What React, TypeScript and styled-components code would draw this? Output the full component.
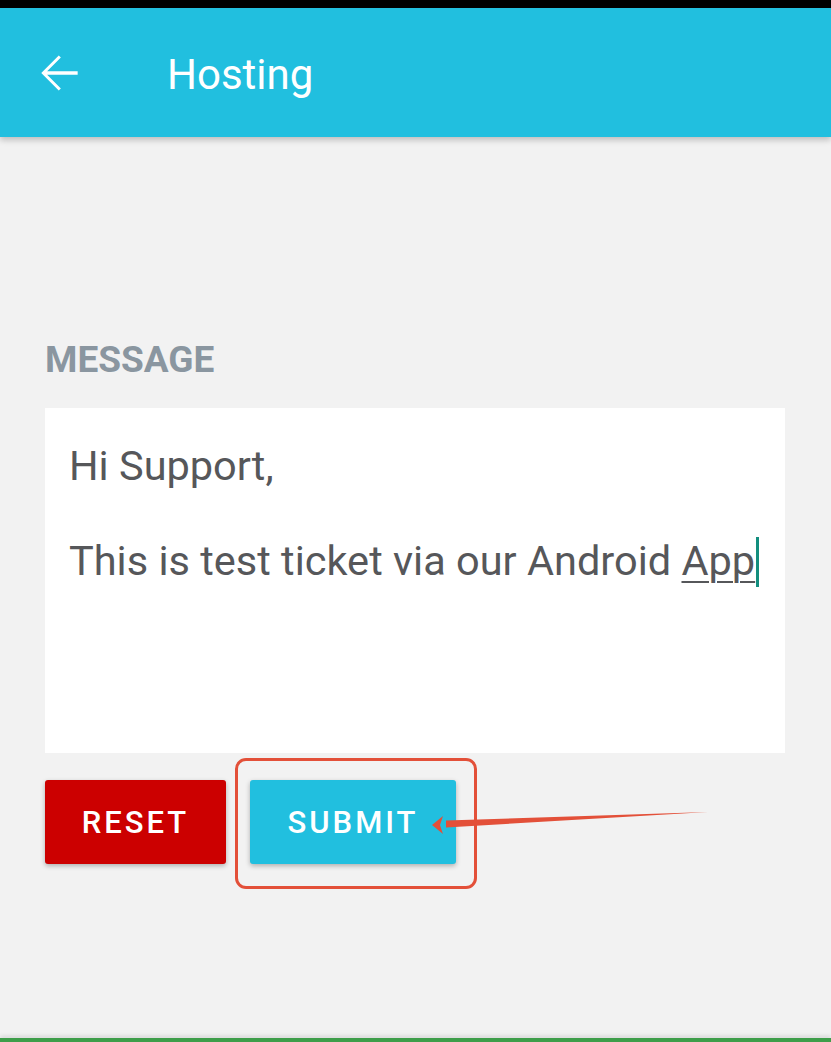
import styled, { createGlobalStyle } from "styled-components";

const Global = createGlobalStyle`
  html, body {
    margin: 0;
    padding: 0;
    background: #f2f2f2;
    font-family: Roboto, "Noto Sans", sans-serif;
  }
`;

const Screen = styled.div`
  position: relative;
  width: 831px;
  height: 1042px;
  overflow: hidden;
  display: flex;
  flex-direction: column;
  background: #f2f2f2;
`;

const StatusBar = styled.div`
  height: 8px;
  flex-shrink: 0;
  background: #000;
`;

const AppBar = styled.header`
  height: 129px;
  flex-shrink: 0;
  display: flex;
  align-items: center;
  background: #21bfdf;
  box-shadow: 0 3px 6px rgba(0, 0, 0, 0.22);
  z-index: 1;
`;

const BackButton = styled.button`
  width: 56px;
  height: 56px;
  margin-left: 31px;
  padding: 0;
  border: 0;
  background: transparent;
  display: flex;
  align-items: center;
  justify-content: center;
`;

const Title = styled.h1`
  margin: 4px 0 0 80px;
  font-size: 42px;
  font-weight: 400;
  color: #fff;
`;

const Content = styled.main`
  flex: 1;
  padding: 203px 46px 0 45px;
  display: flex;
  flex-direction: column;
`;

const Label = styled.label`
  font-size: 37px;
  font-weight: 700;
  color: #8a96a0;
  line-height: 40px;
  margin-bottom: 28px;
`;

const MessageBox = styled.div`
  width: 740px;
  height: 345px;
  background: #fff;
  box-sizing: border-box;
  padding: 33px 0 33px 24px;
  font-size: 41.5px;
  line-height: 50px;
  color: #56575a;
  white-space: nowrap;
`;

const Line = styled.p`
  margin: 0 0 45px;
`;

const Underlined = styled.span`
  text-decoration: underline;
  text-underline-offset: 6px;
  text-decoration-thickness: 2px;
`;

const Caret = styled.span`
  display: inline-block;
  width: 3px;
  height: 50px;
  background: #128e7e;
  vertical-align: -12px;
  margin-left: 1px;
`;

const Actions = styled.div`
  display: flex;
  gap: 24px;
  margin-top: 27px;
`;

const ActionButton = styled.button<{ $bg: string; $w: number }>`
  width: ${(p) => p.$w}px;
  height: 84px;
  border: 0;
  border-radius: 3px;
  background: ${(p) => p.$bg};
  color: #fff;
  font-family: Roboto, sans-serif;
  font-size: 31px;
  font-weight: 500;
  letter-spacing: 3px;
  box-shadow: 0 2px 5px rgba(0, 0, 0, 0.28);
`;

const Highlight = styled.div`
  position: absolute;
  left: 235px;
  top: 758px;
  width: 242px;
  height: 131px;
  border: 3px solid #e35039;
  border-radius: 11px;
  box-sizing: border-box;
`;

const Pointer = styled.svg`
  position: absolute;
  left: 0;
  top: 0;
`;

const BottomBar = styled.div`
  position: absolute;
  left: 0;
  right: 0;
  bottom: 0;
  height: 4px;
  background: #3e9e4a;
  box-shadow: 0 -2px 4px rgba(0, 0, 0, 0.12);
`;

export default function App() {
  return (
    <>
      <Global />
      <Screen>
        <StatusBar />
        <AppBar>
          <BackButton aria-label="back">
            <svg width="56" height="56" viewBox="0 0 24 24">
              <path
                d="M20 11.3H6.9l5.9-5.9-.9-.9L4.4 12l7.5 7.5.9-.9-5.9-5.9H20z"
                fill="#fff"
              />
            </svg>
          </BackButton>
          <Title>Hosting</Title>
        </AppBar>

        <Content>
          <Label>MESSAGE</Label>
          <MessageBox>
            <Line>Hi Support,</Line>
            <Line>
              This is test ticket via our Android <Underlined>App</Underlined>
              <Caret />
            </Line>
          </MessageBox>
          <Actions>
            <ActionButton $bg="#cc0000" $w={181}>RESET</ActionButton>
            <ActionButton $bg="#21bfdf" $w={206}>SUBMIT</ActionButton>
          </Actions>
        </Content>

        <Highlight />
        <Pointer width="831" height="1042" viewBox="0 0 831 1042">
          <polygon points="708,812 446,820.5 446,827.5" fill="#e35039" />
          <polygon points="432,825 443,816 440,825 443,834" fill="#e35039" />
        </Pointer>
        <BottomBar />
      </Screen>
    </>
  );
}
